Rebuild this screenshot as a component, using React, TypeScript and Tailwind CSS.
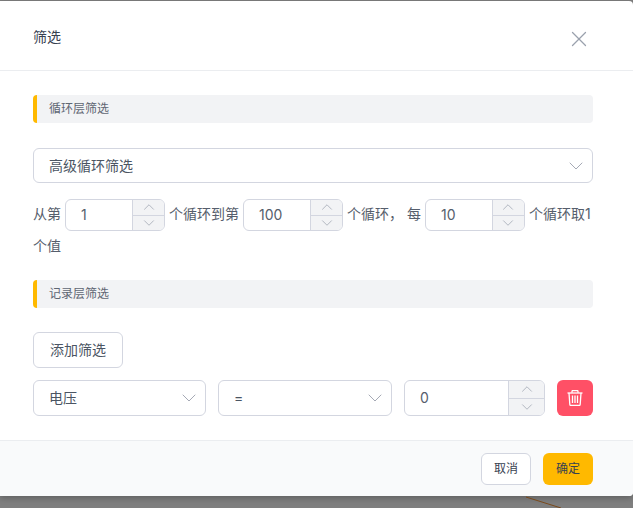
import React from 'react';
import { ChevronDown, ChevronUp, X } from 'lucide-react';

const FONT = "font-['Inter','Noto_Sans_CJK_SC',sans-serif]";

const SectionBar: React.FC<{ title: string }> = ({ title }) => (
  <div className="h-7 rounded-[4px] border-l-4 border-[#ffb900] bg-[#f2f3f5] pl-3 text-xs leading-7 text-[#5f6673]">
    {title}
  </div>
);

const NumberInput: React.FC<{ value: string; className?: string; tall?: boolean }> = ({ value, className = '', tall }) => (
  <span
    className={`inline-flex overflow-hidden rounded-md border border-[#d3d6e0] bg-white align-middle ${tall ? 'h-9 w-[141px]' : 'mx-1 h-8 w-[100px]'} ${className}`}
  >
    <span className={`flex-1 pl-[15px] text-sm text-[#565e6c] ${tall ? 'leading-[34px]' : 'leading-[30px]'}`}>{value}</span>
    <span className={`flex flex-col border-l border-[#d3d6e0] bg-[#f2f3f5] text-[#9ca3af] ${tall ? 'w-9' : 'w-8'}`}>
      <span className="flex min-h-0 flex-1 basis-0 items-center justify-center overflow-hidden border-b border-[#d3d6e0]">
        <ChevronUp size={18} strokeWidth={1} className="shrink-0" />
      </span>
      <span className="flex min-h-0 flex-1 basis-0 items-center justify-center overflow-hidden">
        <ChevronDown size={18} strokeWidth={1} className="shrink-0" />
      </span>
    </span>
  </span>
);

const SelectBox: React.FC<{ label: string; className?: string }> = ({ label, className = '' }) => (
  <div className={`flex h-9 items-center justify-between rounded-md border border-[#d3d6e0] bg-white pl-[15px] pr-[4px] text-sm text-[#4b5563] ${className}`}>
    <span>{label}</span>
    <ChevronDown size={24} strokeWidth={1} className="text-[#a5a9b5]" />
  </div>
);

const TrashIcon = () => (
  <svg width="16" height="16" viewBox="0 0 16 16" fill="none" stroke="white" strokeWidth="1.3">
    <path d="M.5 3h15" />
    <path d="M5 2.8V1.5c0-.6.4-1 1-1h4c.6 0 1 .4 1 1v1.3" />
    <path d="M2 3l.8 11.2c0 .8.6 1.3 1.3 1.3h7.8c.7 0 1.3-.5 1.3-1.3L14 3" />
    <path d="M5.5 5.5v7.5M8 5.5v7.5M10.5 5.5v7.5" />
  </svg>
);

const App: React.FC = () => {
  return (
    <div className={`flex h-[508px] w-[633px] flex-col overflow-hidden bg-[#7f7f7f] pt-px ${FONT}`}>
      <div className="h-[495px] w-full shrink-0 rounded-r-[4px] bg-white shadow-[0_2px_6px_rgba(0,0,0,0.25)]">
        <div className="flex h-[69px] items-start justify-between pl-[33px] pr-[41px] text-sm text-[#374151]">
          <span className="mt-[26px] leading-5">筛选</span>
          <X size={26} strokeWidth={1.2} className="mt-[25px] text-[#9aa1ad]" />
        </div>

        <div className="h-[370px] border-t border-[#ebedf0] pl-[33px] pr-10 pt-6">
          <SectionBar title="循环层筛选" />
          <SelectBox label="高级循环筛选" className="mt-[25px] h-[35px]" />

          <div className="mt-4 text-sm leading-[30px] text-[#565e6c]">
            <span>从第</span>
            <NumberInput value="1" />
            <span>个循环到第</span>
            <NumberInput value="100" />
            <span>个循环， 每</span>
            <NumberInput value="10" />
            <span>个循环取1</span>
            <span>个值</span>
          </div>

          <div className="mt-[19px]">
            <SectionBar title="记录层筛选" />
          </div>

          <button className="mt-6 block h-9 w-[90px] rounded-md border border-[#d3d6e0] bg-white text-sm text-[#4b5563]">
            添加筛选
          </button>

          <div className="mt-3 flex">
            <SelectBox label="电压" className="w-[173px]" />
            <SelectBox label="=" className="ml-3 w-[174px]" />
            <NumberInput value="0" tall className="ml-3" />
            <button className="ml-3 flex h-9 w-9 items-center justify-center rounded-md bg-[#ff5066]">
              <TrashIcon />
            </button>
          </div>
        </div>

        <div className="flex h-14 justify-end gap-3 rounded-br-[4px] border-t border-[#ebedf0] bg-[#f9fafb] pr-10 pt-3 text-xs text-[#374151]">
          <button className="h-8 w-[50px] rounded-md border border-[#d3d6e0] bg-white">取消</button>
          <button className="h-8 w-[50px] rounded-md bg-[#ffb900]">确定</button>
        </div>
      </div>

      <svg width="633" height="12" viewBox="0 0 633 12" className="block shrink-0" fill="none">
        <path d="M526 1L561 12" stroke="#7a4a1c" strokeWidth="1" />
      </svg>
    </div>
  );
};

export default App;
